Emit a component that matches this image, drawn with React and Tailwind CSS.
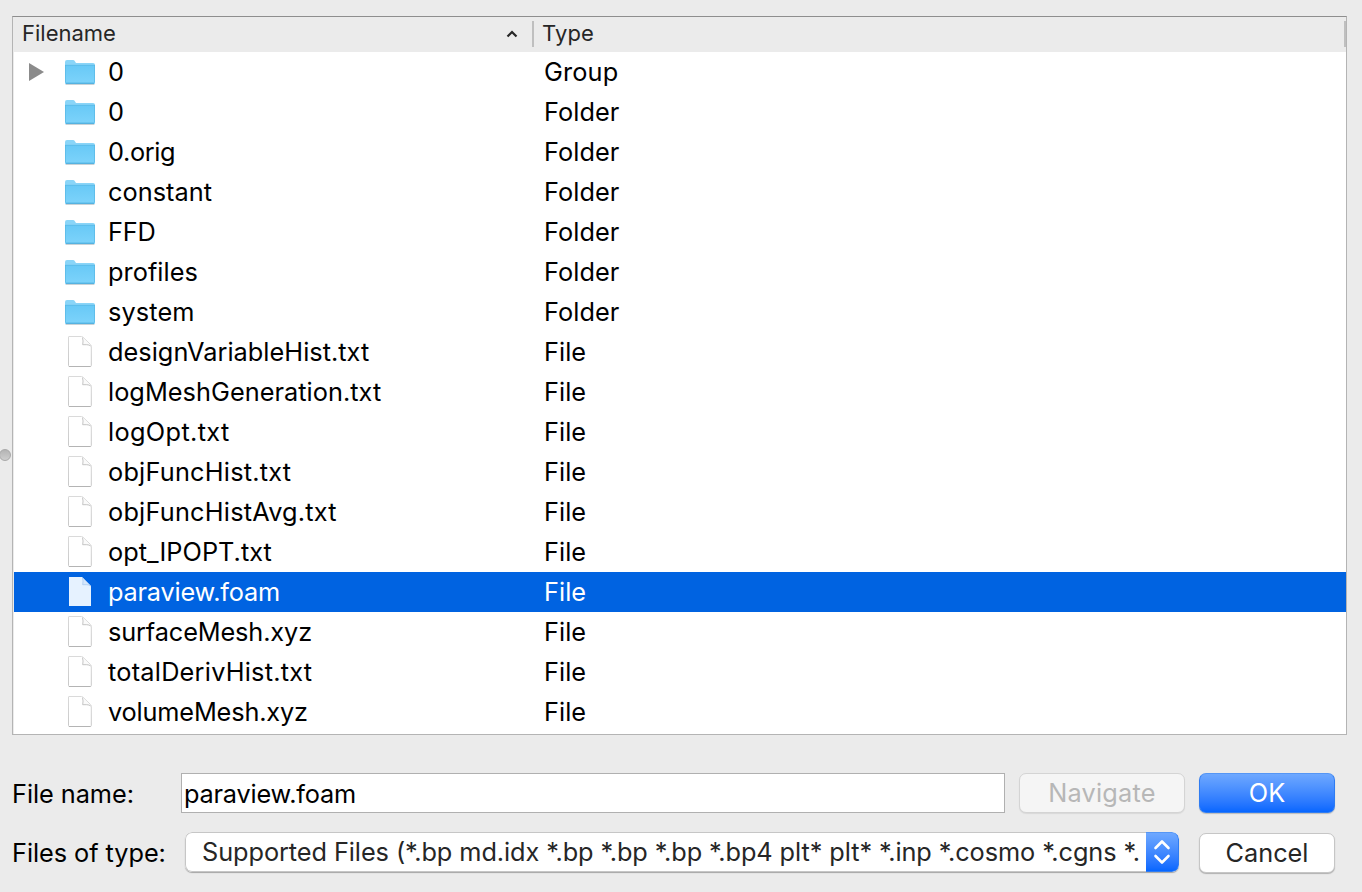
const ENTRIES = [
  { name: "0", type: "Group", kind: "folder", expandable: true, tracking: "tracking-normal" },
  { name: "0", type: "Folder", kind: "folder", tracking: "tracking-normal" },
  { name: "0.orig", type: "Folder", kind: "folder", tracking: "tracking-[-0.35px]" },
  { name: "constant", type: "Folder", kind: "folder", tracking: "tracking-[0.05px]" },
  { name: "FFD", type: "Folder", kind: "folder", tracking: "tracking-[-0.2px]" },
  { name: "profiles", type: "Folder", kind: "folder", tracking: "tracking-[0.05px]" },
  { name: "system", type: "Folder", kind: "folder", tracking: "tracking-[0.13px]" },
  { name: "designVariableHist.txt", type: "File", kind: "file", tracking: "tracking-[0.03px]" },
  { name: "logMeshGeneration.txt", type: "File", kind: "file", tracking: "tracking-[0.04px]" },
  { name: "logOpt.txt", type: "File", kind: "file", tracking: "tracking-[0.35px]" },
  { name: "objFuncHist.txt", type: "File", kind: "file", tracking: "tracking-[0.22px]" },
  { name: "objFuncHistAvg.txt", type: "File", kind: "file", tracking: "tracking-[0.22px]" },
  { name: "opt_IPOPT.txt", type: "File", kind: "file", tracking: "tracking-[0.04px]" },
  { name: "paraview.foam", type: "File", kind: "file", selected: true, tracking: "tracking-[-0.2px]" },
  { name: "surfaceMesh.xyz", type: "File", kind: "file", tracking: "tracking-[-0.12px]" },
  { name: "totalDerivHist.txt", type: "File", kind: "file", tracking: "tracking-[0.24px]" },
  { name: "volumeMesh.xyz", type: "File", kind: "file", tracking: "tracking-[-0.16px]" },
];

const TYPE_TRACKING = {
  Group: "tracking-[0.15px]",
  Folder: "tracking-[0.08px]",
  File: "tracking-[0.05px]",
};

function FolderIcon() {
  return (
    <svg width="32" height="32" viewBox="0 0 32 32" className="shrink-0">
      <defs>
        <linearGradient id="folderFront" x1="0" y1="0" x2="0" y2="1">
          <stop offset="0" stopColor="#68c9f6" />
          <stop offset="1" stopColor="#7dd3fb" />
        </linearGradient>
      </defs>
      <path d="M1.500 28.500h29" stroke="#000" strokeOpacity=".16" />
      <path d="M1 6q0-2 2-2h6q1.200 0 1.900 1.200L12 7h17q2 0 2 2v17.500q0 1.500-1.500 1.500h-27Q1 28 1 26.500z" fill="#8ad5f8" />
      <path d="M1 9h30v17.500q0 1.500-1.500 1.500h-27Q1 28 1 26.500z" fill="url(#folderFront)" />
      <path d="M1.500 9v17.500M30.500 9v17.500M1 9.300h30" stroke="#56b5e2" strokeOpacity=".65" fill="none" />
      <path d="M2 26.500h28" stroke="#63c0ec" strokeOpacity=".7" />
      <path d="M2 27.600h28" stroke="#51afdd" />
    </svg>
  );
}

function FileIcon({ selected }) {
  if (selected) {
    return (
      <svg width="32" height="32" viewBox="0 0 32 32" className="shrink-0">
        <path d="M5 1h13L27 10v20H5z" fill="#e6f2ff" />
        <path d="M18.500 1.500q1 3.500.2 7.200h4q2.500 0 4 1.300" fill="#d6e7fb" stroke="#a9c9ef" strokeWidth=".8" />
      </svg>
    );
  }
  return (
    <svg width="32" height="32" viewBox="0 0 32 32" className="shrink-0">
      <defs>
        <linearGradient id="pageEdge" x1="0" y1="0" x2="0" y2="1">
          <stop offset="0" stopColor="#dadada" />
          <stop offset="1" stopColor="#c8c8c8" />
        </linearGradient>
      </defs>
      <path d="M5 .5h12.500q.8 0 1.500.7l7.500 7.400q.8.800.8 1.700V29.500q0 1-1 1H5.500q-1 0-1-1V1q0-.5.5-.5z" fill="#fff" stroke="url(#pageEdge)" />
      <path d="M5 30.500h21.500" stroke="#b4b4b4" strokeWidth="1" />
      <path d="M18.500 1.500q1 3.500.2 7.200h4q2.500 0 4 1.300" fill="#fafafa" stroke="#bdbdbd" strokeWidth=".9" />
    </svg>
  );
}

function Row({ entry }) {
  return (
    <div className={entry.selected ? "flex h-10 items-center bg-[#0063e1] text-white" : "flex h-10 items-center text-black"}>
      <div className="flex h-full w-[50px] shrink-0 items-center pl-[15px]">
        {entry.expandable && (
          <svg width="16" height="18" viewBox="0 0 16 18">
            <path d="M0 0L15 9L0 18z" fill="#8b8b8b" />
          </svg>
        )}
      </div>
      {entry.kind === "folder" ? <FolderIcon /> : <FileIcon selected={entry.selected} />}
      <div className="w-[448px] shrink-0 whitespace-pre pl-3">
        <span className={entry.tracking}>{entry.name}</span>
      </div>
      <span className={TYPE_TRACKING[entry.type]}>{entry.type}</span>
    </div>
  );
}

export default function App() {
  return (
    <div className="flex h-[892px] w-[1362px] flex-col overflow-hidden bg-[#ebebeb] pt-4 font-['Inter',sans-serif] text-[25.3px] leading-10 text-black">
      <div className="flex h-[719px]">
        <div className="flex w-3 shrink-0 items-center pt-[158px]">
          <div className="-ml-px size-3 shrink-0 rounded-full border border-[#a8a8a8] bg-linear-to-b from-[#b4b4b4] to-[#cecece]" />
        </div>
        <div className="w-[1335px] border border-[#b4b4b4] border-t-[#8e8e8e] pl-px">
          <div className="-ml-px flex h-[35px] bg-[#ebebeb] text-[22px] leading-[33px] text-[#262626]">
            <div className="flex h-[33px] w-[519px] items-center justify-between pl-[9px] pr-[14px]">
              <span className="tracking-normal">Filename</span>
              <svg width="12" height="8" viewBox="0 0 12 8">
                <path d="M1.500 6.500L6 2L10.500 6.500" fill="none" stroke="#262626" strokeWidth="2.200" />
              </svg>
            </div>
            <div className="mt-1 h-[26px] w-0.5 bg-[#bfbfbf]" />
            <span className="grow pl-2 tracking-[0.100px]">Type</span>
            <div className="mt-1 h-[26px] w-0.5 bg-[#bfbfbf]" />
          </div>
          <div className="h-[682px] bg-white">
            {ENTRIES.map((entry, i) => (
              <Row key={i} entry={entry} />
            ))}
          </div>
        </div>
      </div>
      <div className="mt-[38px] flex h-10 pl-3">
        <label className="w-[169px] pt-px tracking-[-0.05px]">File name:</label>
        <div className="w-[824px] border border-[#b0b0b0] bg-white pl-0.5">
          <span className="tracking-[-0.2px]">paraview.foam</span>
        </div>
        <button className="ml-3.5 h-10 w-[166px] rounded-[7px] border border-[#d4d4d4] bg-[#f5f5f5] leading-[38px] tracking-[0.200px] text-[#b7b7b7] shadow-[0_1px_1px_rgba(0,0,0,0.08)]">Navigate</button>
        <button className="ml-3.5 h-10 w-[136px] rounded-[7px] border border-[#2f7cf2] border-t-[#5596f5] bg-linear-to-b from-[#6ea8ff] to-[#0566ff] leading-[38px] text-white shadow-[0_1px_1px_rgba(0,0,0,0.2)]">OK</button>
      </div>
      <div className="mt-[19px] flex h-[41px] pl-3">
        <label className="w-[173px] pt-px tracking-[-0.05px]">Files of type:</label>
        <div className="flex h-10 w-[994px] overflow-hidden rounded-[7px] bg-white text-[#262626] shadow-[0_1px_1px_rgba(0,0,0,0.3)]">
          <div className="w-[961px] shrink-0 overflow-hidden whitespace-pre rounded-l-[7px] border border-r-0 border-[#c6c6c6] pl-4 leading-[38px] tracking-[-0.07px]">
            Supported Files (*.bp md.idx *.bp *.bp *.bp *.bp4 plt* plt* *.inp *.cosmo *.cgns *.
          </div>
          <div className="flex w-[33px] items-center justify-center rounded-r-[7px] border border-l-0 border-[#2f7cf2] border-t-[#5596f5] bg-linear-to-b from-[#6ea8ff] to-[#0566ff]">
            <svg width="18" height="26" viewBox="0 0 18 26">
              <path d="M2.500 9L9 2.500L15.500 9M2.500 17L9 23.500L15.500 17" fill="none" stroke="#fff" strokeWidth="2.600" strokeLinecap="round" strokeLinejoin="round" />
            </svg>
          </div>
        </div>
        <button className="ml-5 mt-px h-10 w-[136px] rounded-[7px] border border-[#c6c6c6] bg-white leading-[38px] text-[#262626] shadow-[0_1px_1px_rgba(0,0,0,0.25)]">Cancel</button>
      </div>
    </div>
  );
}
